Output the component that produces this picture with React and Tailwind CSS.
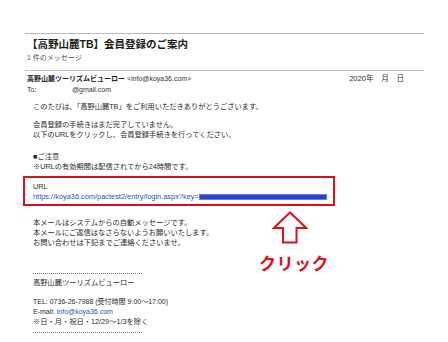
import React from 'react';

const font = { fontFamily: '"Liberation Sans", "Noto Sans CJK JP", sans-serif' };

function UpArrow() {
    return (
        <svg width="36" height="33" viewBox="0 0 36 33" className="block">
            <path
                d="M18 1.5 L1.8 17 L11 17 L11 31.5 L24.5 31.5 L24.5 17 L34.2 17 Z"
                fill="#fff"
                stroke="#e0101e"
                strokeWidth="2"
                strokeLinejoin="miter"
            />
        </svg>
    );
}

export default function App() {
    return (
        <div className="w-[448px] h-[342px] bg-white overflow-hidden text-[#222]" style={font}>
            {/* Header */}
            <div className="ml-[25px] mr-[24px] mt-[33px] border-t border-[#b8b8b8]">
                <div className="pl-[2px] mt-[3px] text-[10.5px] leading-[14px] font-bold text-[#1a1a1a]">
                    【高野山麓TB】会員登録のご案内
                </div>
                <div className="pl-[2px] mt-[2px] text-[7px] leading-[10px] text-[#555]">1 件のメッセージ</div>
            </div>
            <div className="ml-[25px] mr-[24px] mt-[7px] border-t border-[#c4c4c4]">
                <div className="pl-[2px] mt-[3px] flex justify-between pr-[20px] text-[7px] leading-[10px]">
                    <div>
                        <span className="font-bold">高野山麓ツーリズムビューロー</span>
                        <span className="text-[#333]"> &lt;info@koya36.com&gt;</span>
                    </div>
                    <div className="text-[7.6px] text-[#333]">2020年　月　日</div>
                </div>
                <div className="pl-[2px] mt-[1px] flex text-[7px] leading-[10px] text-[#333]">
                    <span className="w-[45px]">To:</span>
                    <span>@gmail.com</span>
                </div>
            </div>

            {/* Body */}
            <div className="ml-[23px] mt-[7px] text-[7.25px] leading-[10px] text-[#2a2a2a]">
                <div className="pl-[10px]">このたびは、「高野山麓TB」をご利用いただきありがとうございます。</div>
                <div className="pl-[10px] mt-[8px]">会員登録の手続きはまだ完了していません。</div>
                <div className="pl-[10px]">以下のURLをクリックし、会員登録手続きを行ってください。</div>
                <div className="pl-[10px] mt-[12px]">■ご注意</div>
                <div className="pl-[10px]">※URLの有効期間は配信されてから24時間です。</div>

                <div className="mt-[4px] w-[312px] border-2 border-[#d8101c] pl-[8px] pr-[6px] pt-[4px] pb-[2px]">
                    <div>URL</div>
                    <div className="flex items-center text-[7.4px] text-[#2456b0]">
                        <span className="whitespace-nowrap">https://koya36.com/pactest2/entry/login.aspx?key=</span>
                        <span className="flex-1 h-[6px] bg-[#2b3fd2] border border-[#6f7fe6]" />
                    </div>
                </div>

                <div className="flex items-start">
                    <div className="w-[236px] pl-[10px] mt-[12px]">
                        <div>本メールはシステムからの自動メッセージです。</div>
                        <div>本メールにご返信はなさらないようお願いいたします。</div>
                        <div>お問い合わせは下記までご連絡くださいませ。</div>

                        <div className="mt-[25px] w-[109px] border-t border-dotted border-[#777]" />
                        <div className="mt-[4px]">高野山麓ツーリズムビューロー</div>
                        <div className="mt-[9px] text-[7px]">TEL: 0736-26-7988 (受付時間 9:00〜17:00)</div>
                        <div className="text-[7px]">
                            E-mail: <span className="text-[#2456b0]">info@koya36.com</span>
                        </div>
                        <div>※日・月・祝日・12/29〜1/3を除く</div>
                        <div className="mt-[5px] w-[109px] border-t border-dotted border-[#777]" />
                    </div>

                    <div className="mt-[5px] flex flex-col items-start">
                        <div className="ml-[13px]">
                            <UpArrow />
                        </div>
                        <div className="mt-[11px] text-[17px] leading-[20px] font-bold text-[#e0101e] tracking-[0.5px]">
                            クリック
                        </div>
                    </div>
                </div>
            </div>
        </div>
    );
}
